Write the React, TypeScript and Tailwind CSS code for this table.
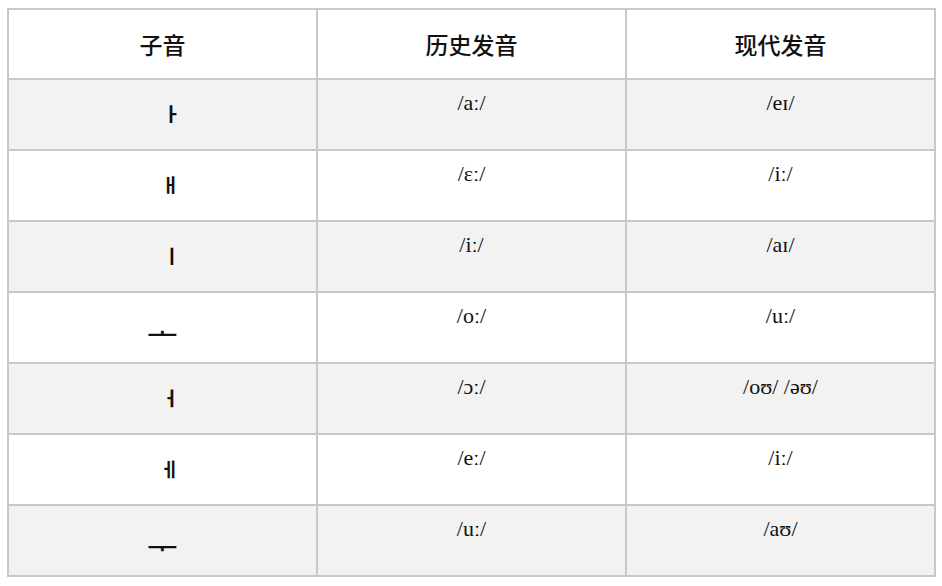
const rows = [
  { v: "ᅡ", old: "/aː/", now: "/eɪ/" },
  { v: "ᅢ", old: "/ɛː/", now: "/iː/" },
  { v: "ᅵ", old: "/iː/", now: "/aɪ/" },
  { v: "ᅩ", old: "/oː/", now: "/uː/" },
  { v: "ᅥ", old: "/ɔː/", now: "/oʊ/ /əʊ/" },
  { v: "ᅦ", old: "/eː/", now: "/iː/" },
  { v: "ᅮ", old: "/uː/", now: "/aʊ/" },
];

const App = () => {
  return (
    <div className="min-h-screen bg-white pt-[8px] pl-[7px]">
      <table className="w-[929px] border-collapse border-2 border-[#c9c9c9] text-[#111]">
        <thead>
          <tr className="h-[70px]">
            {["子音", "历史发音", "现代发音"].map((h) => (
              <th
                key={h}
                className="w-1/3 border-2 border-[#c9c9c9] text-center align-middle text-[23px] font-medium font-['Noto_Sans_CJK_SC',sans-serif]"
              >
                {h}
              </th>
            ))}
          </tr>
        </thead>
        <tbody>
          {rows.map((r, i) => (
            <tr key={i} className={`h-[71px] ${i % 2 === 0 ? "bg-[#f2f2f2]" : "bg-white"}`}>
              <td className="border-2 border-[#c9c9c9] text-center align-middle pt-[10px] text-[34px] leading-none font-normal font-['Noto_Sans_CJK_KR',sans-serif]">
                {r.v}
              </td>
              <td className="border-2 border-[#c9c9c9] text-center align-top pt-[6px] text-[22px] font-['Liberation_Serif','DejaVu_Serif',serif]">
                {r.old}
              </td>
              <td className="border-2 border-[#c9c9c9] text-center align-top pt-[6px] text-[22px] font-['Liberation_Serif','DejaVu_Serif',serif]">
                {r.now}
              </td>
            </tr>
          ))}
        </tbody>
      </table>
    </div>
  );
};

export default App;
